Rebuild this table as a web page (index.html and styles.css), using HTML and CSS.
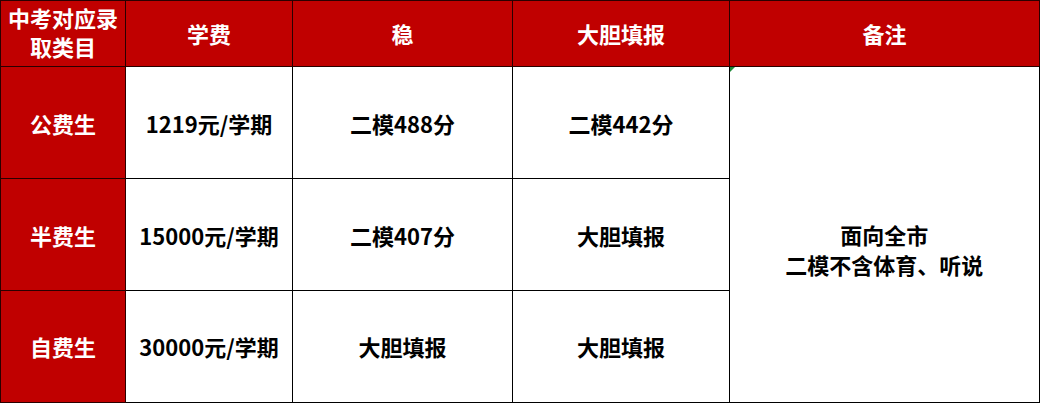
FILE: index.html
```html
<!DOCTYPE html>
<html lang="zh-CN">
<head>
<meta charset="utf-8">
<title>中考对应录取类目</title>
<link rel="stylesheet" href="styles.css">
</head>
<body>
<table class="sheet">
  <colgroup>
    <col class="c1"><col class="c2"><col class="c3"><col class="c4"><col class="c5">
  </colgroup>
  <thead>
    <tr class="head">
      <th class="two">中考对应录<br>取类目</th>
      <th>学费</th>
      <th>稳</th>
      <th>大胆填报</th>
      <th class="note-head">备注</th>
    </tr>
  </thead>
  <tbody>
    <tr>
      <th class="rowhead">公费生</th>
      <td>1219元/学期</td>
      <td>二模488分</td>
      <td>二模442分</td>
      <td class="note" rowspan="3">面向全市<br>二模不含体育、听说</td>
    </tr>
    <tr>
      <th class="rowhead">半费生</th>
      <td>15000元/学期</td>
      <td>二模407分</td>
      <td>大胆填报</td>
    </tr>
    <tr>
      <th class="rowhead">自费生</th>
      <td>30000元/学期</td>
      <td>大胆填报</td>
      <td>大胆填报</td>
    </tr>
  </tbody>
</table>
</body>
</html>
```
FILE: styles.css
```css
html, body {
  margin: 0;
  padding: 0;
  background: #ffffff;
}

.sheet {
  border-collapse: collapse;
  table-layout: fixed;
  width: 1039px;
  font-family: "Microsoft YaHei", "Noto Sans CJK SC", "Noto Sans", sans-serif;
  font-weight: 700;
  font-size: 22px;
  color: #000;
}

.c1 { width: 125px; }
.c2 { width: 167px; }
.c3 { width: 220px; }
.c4 { width: 217px; }
.c5 { width: 310px; }

.sheet th,
.sheet td {
  border: 1px solid #000;
  text-align: center;
  vertical-align: middle;
  padding: 0;
  line-height: 30px;
}

.head {
  height: 66px;
}

.head th {
  background: #c00000;
  color: #ffffff;
  border-color: #2a0000;
  padding-bottom: 2px;
}

.head th.two {
  padding-bottom: 4px;
  line-height: 29px;
}

.sheet tbody tr {
  height: 112px;
}

.rowhead {
  background: #c00000;
  color: #ffffff;
  border-color: #2a0000 !important;
}

.note {
  position: relative;
  line-height: 33px;
  padding-top: 29px !important;
  border-right: 2px solid #000 !important;
  border-bottom: 2px solid #000 !important;
}

.note::before {
  content: "";
  position: absolute;
  left: 0;
  top: 0;
  border-top: 5px solid #1f8b3a;
  border-right: 5px solid transparent;
}

.sheet tbody tr:last-child td,
.sheet tbody tr:last-child th {
  border-bottom: 2px solid #000;
}
```
